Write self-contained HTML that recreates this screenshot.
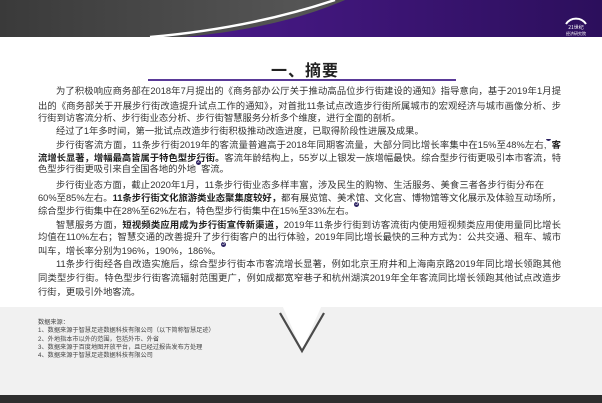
<!DOCTYPE html>
<html><head><meta charset="utf-8"><style>
*{margin:0;padding:0;box-sizing:border-box}
body{width:602px;height:403px;overflow:hidden;background:#fff;position:relative;font-family:"Liberation Sans","Noto Sans CJK SC",sans-serif;color:#333}
.l{position:absolute;font-size:9.3px;line-height:12px;white-space:nowrap}
.j{text-align:justify;text-align-last:justify;white-space:normal;height:12px;overflow:hidden}
b{font-weight:bold;color:#222}
sup{font-size:5px;color:#fff;background:#2a2060;border-radius:50%;display:inline-block;width:5px;height:5px;line-height:5px;text-align:center;vertical-align:top;margin-top:-3px}
.f{position:absolute;left:38px;font-size:6.2px;line-height:8.3px;color:#444}
</style></head><body>
<svg width="602" height="40" style="position:absolute;left:0;top:0">
<defs>
<linearGradient id="g1" x1="0" y1="0" x2="1" y2="0"><stop offset="0" stop-color="#3a3a3a"/><stop offset=".5" stop-color="#555"/><stop offset="1" stop-color="#2c2c2c"/></linearGradient>
<linearGradient id="g2" x1="0" y1="0" x2="1" y2="0"><stop offset="0" stop-color="#4a1a8a"/><stop offset="1" stop-color="#2c0f5c"/></linearGradient>
</defs>
<rect width="602" height="37" fill="url(#g1)"/>
<path d="M185 37 C260 30 310 15 345 0 L602 0 L602 37 Z" fill="url(#g2)"/>
<path d="M150 37 C230 30 290 15 335 0" stroke="#fff" stroke-width="2.5" fill="none"/>
<path d="M566 24 A12 12 0 0 1 586 24" stroke="#fff" stroke-width="2" fill="none"/>
<text x="576" y="29" font-size="5" fill="#fff" text-anchor="middle" font-family="Noto Sans CJK SC">21世纪</text>
<text x="576" y="35" font-size="4" fill="#fff" text-anchor="middle" font-family="Noto Sans CJK SC">经济研究院</text>
</svg>
<div style="position:absolute;left:271px;top:57px;font-size:16px;font-weight:bold;color:#222;letter-spacing:1px">一、摘要</div>
<div style="position:absolute;left:148px;top:79px;width:308px;height:2px;background:#5a3a98"></div>

<div class="l j" style="left:56px;width:505px;top:85px">为了积极响应商务部在2018年7月提出的《商务部办公厅关于推动高品位步行街建设的通知》指导意向，基于2019年1月提</div>
<div class="l j" style="left:38px;width:523px;top:100px">出的《商务部关于开展步行街改造提升试点工作的通知》，对首批11条试点改造步行街所属城市的宏观经济与城市画像分析、步</div>
<div class="l" style="left:38px;top:112px">行街到访客流分析、步行街业态分析、步行街智慧服务分析多个维度，进行全面的剖析。</div>
<div class="l" style="left:56px;top:125px">经过了1年多时间，第一批试点改造步行街积极推动改造进度，已取得阶段性进展及成果。</div>
<div class="l j" style="left:56px;width:505px;top:139px">步行街客流方面，11条步行街2019年的客流量普遍高于2018年同期客流量，大部分同比增长率集中在15%至48%左右,<sup>1</sup><b>客</b></div>
<div class="l j" style="left:38px;width:523px;top:152px"><b>流增长显著，增幅最高皆属于特色型步行街。</b>客流年龄结构上，55岁以上银发一族增幅最快。综合型步行街更吸引本市客流，特</div>
<div class="l" style="left:38px;top:163px">色型步行街更吸引来自全国各地的外地<sup>2</sup>客流。</div>
<div class="l j" style="left:56px;width:488px;top:179px">步行街业态方面，截止2020年1月，11条步行街业态多样丰富，涉及民生的购物、生活服务、美食三者各步行街分布在</div>
<div class="l j" style="left:38px;width:523px;top:192px">60%至85%左右。<b>11条步行街文化旅游类业态聚集度较好，</b>都有展览馆、美术馆、文化宫、博物馆等文化展示及体验互动场所，</div>
<div class="l" style="left:38px;top:205px">综合型步行街集中在28%至62%左右，特色型步行街集中在15%至33%左右。<sup>3</sup></div>
<div class="l j" style="left:56px;width:505px;top:219px">智慧服务方面，<b>短视频类应用成为步行街宣传新渠道，</b>2019年11条步行街到访客流街内使用短视频类应用使用量同比增长</div>
<div class="l j" style="left:38px;width:523px;top:231px">均值在110%左右；智慧交通的改善提升了步行街客户的出行体验，2019年同比增长最快的三种方式为：公共交通、租车、城市</div>
<div class="l" style="left:38px;top:245px">叫车，增长率分别为196%，190%，186%。<sup>3</sup></div>
<div class="l j" style="left:56px;width:505px;top:258px">11条步行街经各自改造实施后，综合型步行街本市客流增长显著，例如北京王府井和上海南京路2019年同比增长领跑其他</div>
<div class="l j" style="left:38px;width:523px;top:272px">同类型步行街。特色型步行街客流辐射范围更广，例如成都宽窄巷子和杭州湖滨2019年全年客流同比增长领跑其他试点改造步</div>
<div class="l" style="left:38px;top:286px">行街，更吸引外地客流。</div>

<div style="position:absolute;left:0;top:307px;width:602px;height:88px;background:#f1f1f1"></div>
<svg width="602" height="50" style="position:absolute;left:0;top:305px">
<defs><linearGradient id="g3" x1="0" y1="0" x2="1" y2="0"><stop offset="0" stop-color="#e4ecec"/><stop offset=".45" stop-color="#4e5a5a"/><stop offset=".55" stop-color="#4e5a5a"/><stop offset="1" stop-color="#e4ecec"/></linearGradient></defs>
<path d="M282 0 L302 45 L322 0 Z" fill="#fff"/>
<path d="M15 8 L280 8 M324 8 L590 8" stroke="url(#g3)" stroke-width="2"/>
<path d="M280 8 L302 46 L324 8" stroke="#4a4a4a" stroke-width="2.2" fill="none"/>
</svg>
<div class="f" style="top:319px">数据来源：<br>1、数据来源于智慧足迹数据科技有限公司（以下简称智慧足迹）<br>2、外地指本市以外的范围，包括外市、外省<br>3、数据来源于百度地图开放平台，且已经过报告发布方处理<br>4、数据来源于智慧足迹数据科技有限公司</div>
<div style="position:absolute;left:0;top:395px;width:602px;height:8px;background:#2e2e2e"></div>
</body></html>
